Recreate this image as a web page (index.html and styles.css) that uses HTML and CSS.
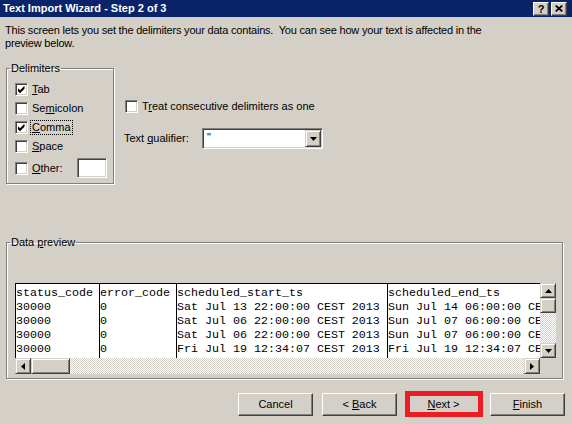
FILE: index.html
```html
<!DOCTYPE html>
<html>
<head>
<meta charset="utf-8">
<title>Text Import Wizard - Step 2 of 3</title>
<link rel="stylesheet" href="styles.css">
</head>
<body>
<div class="window">
  <div class="titlebar">
    <span class="title">Text Import Wizard - Step 2 of 3</span>
    <div class="caption-buttons">
      <span class="cap-btn help">?</span>
      <span class="cap-btn close"><svg width="8" height="7" viewBox="0 0 8 7"><path d="M0.7 0.5L7.3 6.5M7.3 0.5L0.7 6.5" stroke="#000" stroke-width="1.7" fill="none"/></svg></span>
    </div>
  </div>

  <p class="intro">This screen lets you set the delimiters your data contains.&nbsp; You can see how your text is affected in the<br>preview below.</p>

  <div class="options">
    <fieldset class="group delimiters">
      <legend>Delimiters</legend>
      <div class="delim-list">
        <div class="check-row">
          <span class="checkbox"><svg width="11" height="11" viewBox="0 0 11 11"><path d="M2 4.2L4 6.2L8.5 1.7L8.5 4.7L4 9.2L2 7.2Z" fill="#000"/></svg></span>
          <span class="label"><u>T</u>ab</span>
        </div>
        <div class="check-row">
          <span class="checkbox"></span>
          <span class="label">Se<u>m</u>icolon</span>
        </div>
        <div class="check-row">
          <span class="checkbox"><svg width="11" height="11" viewBox="0 0 11 11"><path d="M2 4.2L4 6.2L8.5 1.7L8.5 4.7L4 9.2L2 7.2Z" fill="#000"/></svg></span>
          <span class="label focus"><u>C</u>omma</span>
        </div>
        <div class="check-row">
          <span class="checkbox"></span>
          <span class="label"><u>S</u>pace</span>
        </div>
        <div class="check-row other">
          <span class="checkbox"></span>
          <span class="label"><u>O</u>ther:</span>
          <span class="textbox"></span>
        </div>
      </div>
    </fieldset>

    <div class="side-opts">
      <div class="check-row treat">
        <span class="checkbox"></span>
        <span class="label">T<u>r</u>eat consecutive delimiters as one</span>
      </div>
      <div class="qualifier-row">
        <span class="qual-label">Text <u>q</u>ualifier:</span>
        <div class="combo">
          <span class="combo-value">"</span>
          <span class="sb-btn combo-btn"><svg width="7" height="4" viewBox="0 0 7 4"><path d="M0 0H7L3.5 4Z" fill="#000"/></svg></span>
        </div>
      </div>
    </div>
  </div>

  <fieldset class="group preview">
    <legend>Data <u>p</u>review</legend>
    <div class="preview-body">
      <div class="preview-list">
        <div class="preview-data">
          <div class="col c1"><div>status_code</div><div>30000</div><div>30000</div><div>30000</div><div>30000</div></div>
          <div class="col c2"><div>error_code</div><div>0</div><div>0</div><div>0</div><div>0</div></div>
          <div class="col c3"><div>scheduled_start_ts</div><div>Sat Jul 13 22:00:00 CEST 2013</div><div>Sat Jul 06 22:00:00 CEST 2013</div><div>Sat Jul 06 22:00:00 CEST 2013</div><div>Fri Jul 19 12:34:07 CEST 2013</div></div>
          <div class="col c4"><div>scheduled_end_ts</div><div>Sun Jul 14 06:00:00 CE</div><div>Sun Jul 07 06:00:00 CE</div><div>Sun Jul 07 06:00:00 CE</div><div>Fri Jul 19 12:34:07 CE</div></div>
        </div>
        <div class="vscroll">
          <span class="sb-btn sb-v"><svg width="7" height="4" viewBox="0 0 7 4"><path d="M0 4H7L3.5 0Z" fill="#000"/></svg></span>
          <span class="sb-btn thumb-v"></span>
          <span class="track"></span>
          <span class="sb-btn sb-v"><svg width="7" height="4" viewBox="0 0 7 4"><path d="M0 0H7L3.5 4Z" fill="#000"/></svg></span>
        </div>
        <div class="hscroll">
          <span class="sb-btn sb-h"><svg width="4" height="7" viewBox="0 0 4 7"><path d="M4 0V7L0 3.5Z" fill="#000"/></svg></span>
          <span class="sb-btn thumb-h"></span>
          <span class="track"></span>
          <span class="sb-btn sb-h"><svg width="4" height="7" viewBox="0 0 4 7"><path d="M0 0V7L4 3.5Z" fill="#000"/></svg></span>
        </div>
        <div class="corner"></div>
      </div>
    </div>
  </fieldset>

  <div class="buttons">
    <button class="btn">Cancel</button>
    <button class="btn">&lt; <u>B</u>ack</button>
    <span class="highlight"><button class="btn"><u>N</u>ext &gt;</button></span>
    <button class="btn"><u>F</u>inish</button>
  </div>
</div>
</body>
</html>
```

FILE: styles.css
```css
* {
  box-sizing: border-box;
}

html,
body {
  margin: 0;
  padding: 0;
}

body {
  width: 572px;
  height: 424px;
  overflow: hidden;
  background: #d4d0c8;
  font-family: "Liberation Sans", Arial, sans-serif;
  font-size: 11px;
  line-height: 13px;
  color: #000;
}

.window {
  display: flex;
  flex-direction: column;
  height: 424px;
}

/* Title bar */
.titlebar {
  height: 17px;
  flex: none;
  background: #0a246a;
  display: flex;
  align-items: center;
  justify-content: space-between;
  padding: 0 5px 0 3px;
}

.title {
  color: #fff;
  font-weight: bold;
  font-size: 11px;
  line-height: 17px;
  white-space: nowrap;
}

.caption-buttons {
  display: flex;
  gap: 2px;
}

.cap-btn {
  width: 16px;
  height: 14px;
  background: #d4d0c8;
  border: 1px solid;
  border-color: #fff #404040 #404040 #fff;
  box-shadow: inset -1px -1px #808080;
  display: flex;
  align-items: center;
  justify-content: center;
  font-weight: bold;
  font-size: 11px;
  line-height: 12px;
}

/* Intro */
.intro {
  margin: 7px 0 0;
  padding: 0 5px;
  line-height: 13px;
  letter-spacing: -0.2px;
  white-space: nowrap;
}

/* Group boxes */
.group {
  margin: 0;
  padding: 0;
  min-width: 0;
  border: 1px solid #808080;
  box-shadow: inset 1px 1px #fff, 1px 1px #fff;
}

.group legend {
  margin-left: 3px;
  padding: 0 1px;
  line-height: 13px;
  font-size: 11px;
}

/* Options */
.options {
  display: flex;
  align-items: flex-start;
  margin-top: 12px;
}

.delimiters {
  width: 108px;
  margin-left: 6px;
  flex: none;
}

.delim-list {
  display: flex;
  flex-direction: column;
  padding: 5px 6px 4px 8px;
}

.check-row {
  display: flex;
  align-items: center;
  height: 19px;
}

.check-row.other {
  height: 22px;
  margin-top: 1px;
}

.checkbox {
  flex: none;
  width: 13px;
  height: 13px;
  background: #fff;
  border: 1px solid;
  border-color: #808080 #fff #fff #808080;
  box-shadow: inset 1px 1px #404040, inset -1px -1px #d4d0c8;
  display: flex;
}

.checkbox svg {
  display: block;
}

.label {
  margin-left: 2px;
  padding: 0 1px;
  border: 1px solid transparent;
  line-height: 13px;
  white-space: nowrap;
}

.label.focus {
  border: 1px dotted #000;
}

.textbox {
  margin-left: auto;
  width: 30px;
  height: 20px;
  background: #fff;
  border: 1px solid;
  border-color: #808080 #fff #fff #808080;
  box-shadow: inset 1px 1px #404040, inset -1px -1px #d4d0c8;
}

.side-opts {
  margin-left: 10px;
  display: flex;
  flex-direction: column;
}

.treat {
  margin-top: 38px;
  height: 13px;
  padding-left: 1px;
}

.qualifier-row {
  margin-top: 15px;
  height: 21px;
  display: flex;
  align-items: center;
}

.qual-label {
  width: 78px;
  white-space: nowrap;
}

.combo {
  width: 121px;
  height: 21px;
  padding: 1px;
  background: #fff;
  border: 1px solid;
  border-color: #808080 #fff #fff #808080;
  box-shadow: inset 1px 1px #404040, inset -1px -1px #d4d0c8;
  display: flex;
}

.combo-value {
  flex: 1;
  padding-left: 3px;
  line-height: 15px;
}

/* Raised small buttons (scroll arrows, dropdown) */
.sb-btn {
  flex: none;
  background: #d4d0c8;
  border: 1px solid;
  border-color: #d4d0c8 #404040 #404040 #d4d0c8;
  box-shadow: inset 1px 1px #fff, inset -1px -1px #808080;
  display: flex;
  align-items: center;
  justify-content: center;
}

.sb-btn svg {
  display: block;
}

.combo-btn {
  width: 16px;
  height: 17px;
}

/* Data preview */
.preview {
  width: 557px;
  margin: 52px 0 0 6px;
  flex: none;
}

.preview-body {
  padding: 34px 0 4px 8px;
}

.preview-list {
  width: 541px;
  display: grid;
  grid-template-columns: 525px 16px;
  grid-template-rows: 75px 16px;
}

.preview-data {
  display: flex;
  overflow: hidden;
  background: #fff;
  border-top: 1px solid #000;
  border-left: 1px solid #000;
  font-family: "Liberation Mono", "Courier New", monospace;
  font-size: 11.67px;
  line-height: 14px;
}

.col {
  flex: none;
  padding-top: 2px;
  border-right: 1px solid #000;
  white-space: pre;
  overflow: hidden;
}

.c1 { width: 84px; }
.c2 { width: 77px; }
.c3 { width: 211px; }
.c4 {
  flex: 1;
  min-width: 0;
  border-right: none;
}

.vscroll {
  display: flex;
  flex-direction: column;
}

.sb-v {
  height: 15px;
}

.thumb-v {
  height: 15px;
}

.hscroll {
  display: flex;
}

.sb-h {
  width: 16px;
}

.thumb-h {
  width: 39px;
}

.track {
  flex: 1;
  background: repeating-conic-gradient(#fff 0% 25%, #d4d0c8 0% 50%) 0 0 / 2px 2px;
}

.corner {
  background: #d4d0c8;
}

/* Dialog buttons */
.buttons {
  display: flex;
  justify-content: flex-end;
  gap: 9px;
  padding-right: 7px;
  margin-top: 14px;
}

.btn {
  width: 75px;
  height: 23px;
  padding: 0;
  font: inherit;
  color: #000;
  background: #d4d0c8;
  border: 1px solid;
  border-color: #fff #404040 #404040 #fff;
  box-shadow: inset -1px -1px #808080;
}

.highlight {
  position: relative;
  display: flex;
}

.highlight::after {
  content: "";
  position: absolute;
  left: -1px;
  top: -2px;
  right: -2px;
  bottom: -1px;
  border: 5px solid #ed1c24;
  pointer-events: none;
}
```
